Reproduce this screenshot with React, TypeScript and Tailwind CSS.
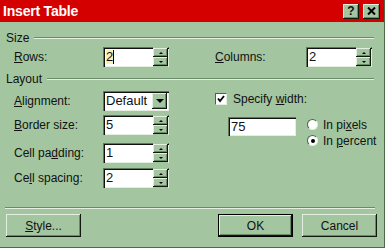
import React from 'react';

const raised =
  'shadow-[inset_-1px_-1px_0_#101810,inset_1px_1px_0_#e4efe2,inset_-2px_-2px_0_#6c8a69]';
const sunken =
  'shadow-[inset_1px_1px_0_#5d785a,inset_2px_2px_0_#111,inset_-1px_-1px_0_#e4efe2]';

function Spinner() {
  return (
    <div className="flex flex-col w-[15px] h-[20px] bg-[#a3c6a0] py-[1px]">
      <div className={`flex-1 flex items-center justify-center ${raised}`}>
        <span className="w-0 h-0 border-l-[2px] border-r-[2px] border-b-[2px] border-l-transparent border-r-transparent border-b-black" />
      </div>
      <div className={`flex-1 flex items-center justify-center ${raised}`}>
        <span className="w-0 h-0 border-l-[2px] border-r-[2px] border-t-[2px] border-l-transparent border-r-transparent border-t-black" />
      </div>
    </div>
  );
}

function SpinInput({ value, cursor }: { value: string; cursor?: boolean }) {
  return (
    <div className={`flex h-[20px] w-[66px] bg-white ${sunken} pl-[3px] pr-[1px]`}>
      <div className="flex-1 flex items-center text-[13px]">
        {cursor ? (
          <span className="bg-[#f4f2b8] border-r border-black leading-[14px]">{value}</span>
        ) : (
          value
        )}
      </div>
      <Spinner />
    </div>
  );
}

function Header({ label }: { label: string }) {
  return (
    <div className="flex items-center h-[14px]">
      <span>{label}</span>
      <div className="flex-1 ml-[5px] mr-[3px] border-t border-t-[#6b8a68] border-b border-b-[#e4efe2]" />
    </div>
  );
}

function Radio({ checked }: { checked?: boolean }) {
  return (
    <div className="w-[11px] h-[11px] rounded-full bg-white flex items-center justify-center border border-t-[#4a6448] border-l-[#4a6448] border-r-[#e4efe2] border-b-[#e4efe2]">
      {checked && <div className="w-[4px] h-[4px] rounded-full bg-black" />}
    </div>
  );
}

function Button({ children, isDefault }: { children: React.ReactNode; isDefault?: boolean }) {
  return (
    <div
      className={`w-[75px] h-[23px] flex items-center justify-center ${raised} ${
        isDefault ? 'outline outline-1 outline-black -outline-offset-1 shadow-[inset_-2px_-2px_0_#101810,inset_1px_1px_0_#101810,inset_2px_2px_0_#e4efe2,inset_-3px_-3px_0_#6c8a69]' : ''
      }`}
    >
      {children}
    </div>
  );
}

export default function App() {
  return (
    <div className="w-[385px] h-[248px] bg-[#a3c6a0] flex flex-col font-['Liberation_Sans',Arial,sans-serif] text-[12px] text-[#111] overflow-hidden border-r border-b border-[#4e6a4b]">
      <div className="h-[22px] bg-[#d40000] flex items-center pl-[3px] pr-[4px]">
        <span className="text-white font-bold text-[14px] tracking-[-0.2px]">Insert Table</span>
        <div className="ml-auto flex gap-[4px]">
          <div className={`w-[16px] h-[15px] bg-[#a3c6a0] flex items-center justify-center font-bold text-[12px] ${raised}`}>?</div>
          <div className={`w-[17px] h-[15px] bg-[#a3c6a0] flex items-center justify-center ${raised}`}>
            <svg width="9" height="8" viewBox="0 0 9 8">
              <path d="M1 0.5 L8 7.5 M8 0.5 L1 7.5" stroke="#000" strokeWidth="2" />
            </svg>
          </div>
        </div>
      </div>

      <div className="flex flex-col pl-[6px] pr-[7px]">
        <div className="mt-[9px]">
          <Header label="Size" />
        </div>
        <div className="mt-[2px] h-[20px] flex items-center pl-[8px]">
          <span className="w-[89px]"><u>R</u>ows:</span>
          <SpinInput value="2" cursor />
          <span className="ml-[46px] w-[91px]"><u>C</u>olumns:</span>
          <SpinInput value="2" />
        </div>

        <div className="mt-[5px]">
          <Header label="Layout" />
        </div>

        <div className="flex mt-[5px]">
          <div className="w-[209px] pl-[8px] flex flex-col">
            <div className="h-[20px] flex items-center">
              <span className="w-[89px]"><u>A</u>lignment:</span>
              <div className={`flex h-[20px] w-[66px] bg-white ${sunken} pl-[3px] pr-[2px] py-[2px]`}>
                <div className="flex-1 flex items-center text-[13px]">Default</div>
                <div className={`w-[15px] bg-[#a3c6a0] flex items-center justify-center ${raised}`}>
                  <span className="w-0 h-0 border-l-[4px] border-r-[4px] border-t-[4px] border-l-transparent border-r-transparent border-t-black" />
                </div>
              </div>
            </div>
            <div className="h-[20px] mt-[4px] flex items-center">
              <span className="w-[89px]"><u>B</u>order size:</span>
              <SpinInput value="5" />
            </div>
            <div className="h-[20px] mt-[8px] flex items-center">
              <span className="w-[89px]">Cell pa<u>d</u>ding:</span>
              <SpinInput value="1" />
            </div>
            <div className="h-[20px] mt-[5px] flex items-center">
              <span className="w-[89px]">Ce<u>l</u>l spacing:</span>
              <SpinInput value="2" />
            </div>
          </div>

          <div className="flex flex-col">
            <div className="flex items-center h-[12px] mt-[2px]">
              <div className="w-[12px] h-[12px] bg-white flex items-center justify-center border border-t-[#4a6448] border-l-[#4a6448] border-r-[#e4efe2] border-b-[#e4efe2]">
                <svg width="8" height="8" viewBox="0 0 8 8">
                  <path d="M1 3.5 L3 6 L7 1" stroke="#000" strokeWidth="1.8" fill="none" />
                </svg>
              </div>
              <span className="ml-[6px]">Specify <u>w</u>idth:</span>
            </div>
            <div className="flex mt-[12px] ml-[13px]">
              <div className={`w-[68px] h-[19px] bg-white ${sunken} pl-[3px] flex items-center text-[13px]`}>75</div>
              <div className="flex flex-col ml-[11px] mt-[2px] gap-[5px]">
                <div className="flex items-center h-[11px]">
                  <Radio />
                  <span className="ml-[5px]">In pi<u>x</u>els</span>
                </div>
                <div className="flex items-center h-[11px]">
                  <Radio checked />
                  <span className="ml-[5px]">In <u>p</u>ercent</span>
                </div>
              </div>
            </div>
          </div>
        </div>

        <div className="mt-[19px] -ml-[1px] mr-[2px] border-t border-t-[#6b8a68] border-b border-b-[#e4efe2]" />

        <div className="flex mt-[5px]">
          <Button><span><u>S</u>tyle...</span></Button>
          <div className="ml-auto flex gap-[9px]">
            <Button isDefault>OK</Button>
            <Button>Cancel</Button>
          </div>
        </div>
      </div>
    </div>
  );
}
